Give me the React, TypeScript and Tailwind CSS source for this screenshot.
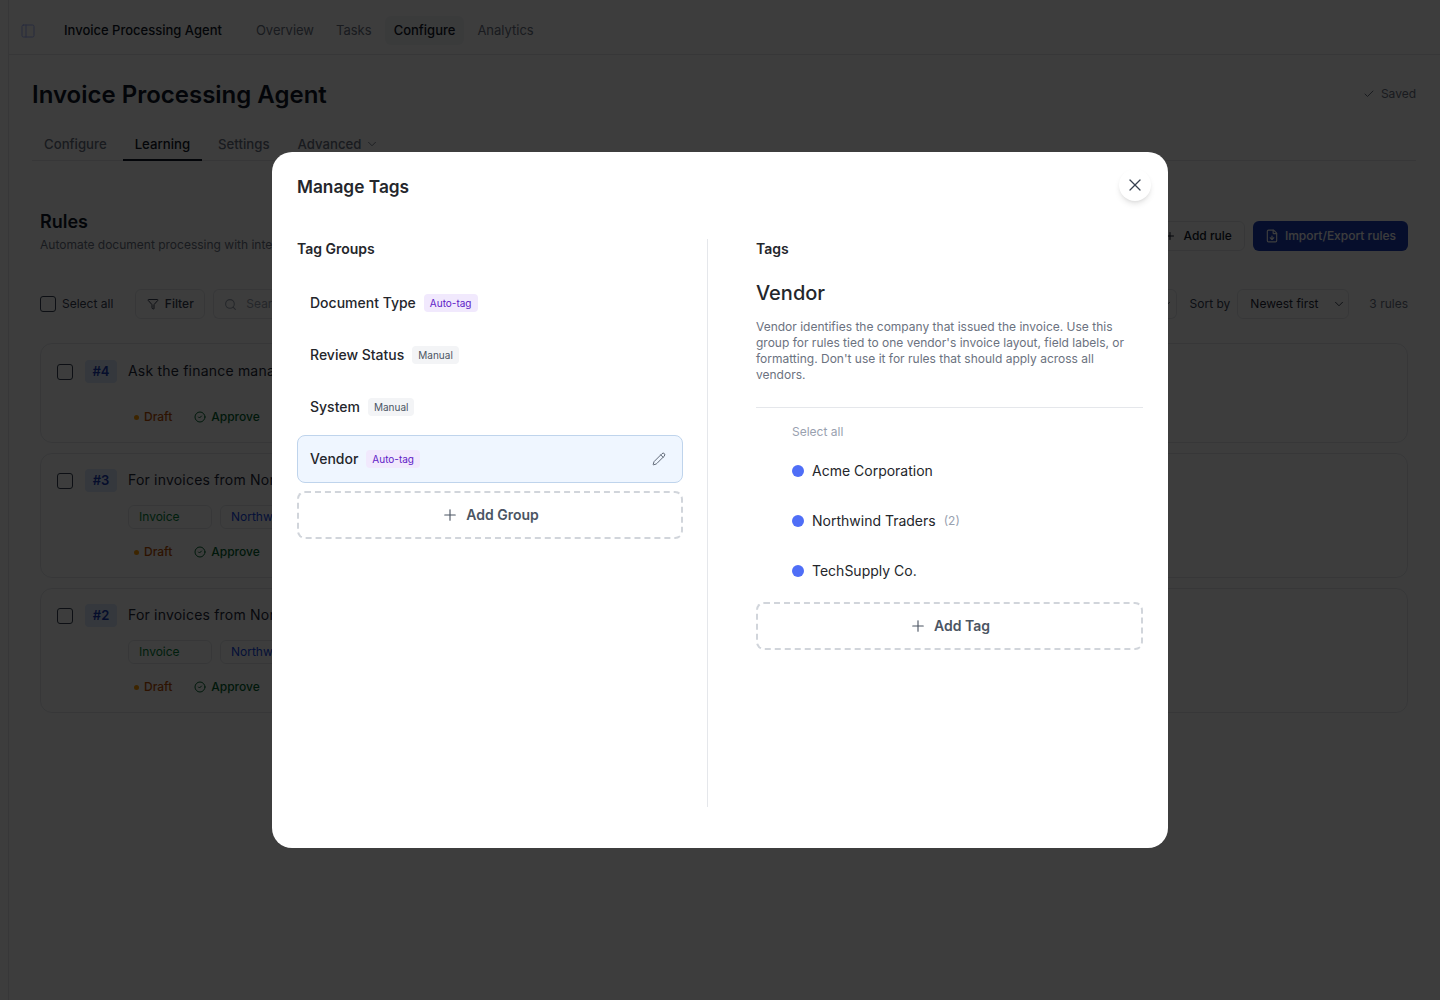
import { Check, ChevronDown, CircleCheck, FileDown, Funnel, PanelLeft, Pencil, Plus, Search, X } from "lucide-react";

const font = { fontFamily: "Inter, 'Liberation Sans', sans-serif" };

const rules = [
  { id: "#4", title: "Ask the finance manager", tags: false },
  { id: "#3", title: "For invoices from Northwind", tags: true },
  { id: "#2", title: "For invoices from Northwind", tags: true },
];

const groups = [
  { name: "Document Type", badge: "Auto-tag" },
  { name: "Review Status", badge: "Manual" },
  { name: "System", badge: "Manual" },
];

function Badge({ label }: { label: string }) {
  const auto = label === "Auto-tag";
  return (
    <span className={`rounded px-[6px] py-[2px] text-[10px] leading-[14px] ${auto ? "bg-[#f1e9fd] text-[#5f1bc7]" : "bg-[#f3f4f6] text-[#4b5563]"}`}>
      {label}
    </span>
  );
}

function RuleCard({ id, title, tags }: { id: string; title: string; tags: boolean }) {
  return (
    <div className={`flex rounded-xl border border-gray-200 bg-white pl-4 ${tags ? "h-[125px] pt-[15px]" : "h-[100px] pt-4"}`}>
      <div className="mt-1 h-4 w-4 rounded-[3px] border border-gray-700" />
      <div className="ml-3 flex h-[23px] w-8 items-center justify-center rounded bg-blue-100 text-[13px] font-semibold text-blue-800">{id}</div>
      <div className="ml-[11px] flex flex-col">
        <div className="text-sm leading-[22px] tracking-[0.2px] text-gray-800">{title}</div>
        {tags && (
          <div className="mt-[14px] flex gap-2 text-xs">
            <span className="flex h-6 w-[84px] items-center rounded-md border border-gray-200 px-[10px] text-green-700">Invoice</span>
            <span className="flex h-6 w-[140px] items-center rounded-md border border-gray-200 px-[10px] text-blue-700">Northwind</span>
          </div>
        )}
        <div className={`ml-[6px] flex items-center text-xs font-medium ${tags ? "mt-[15px]" : "mt-[27px]"}`}>
          <span className="h-[5px] w-[5px] rounded-full bg-amber-500" />
          <span className="ml-[5px] text-amber-700">Draft</span>
          <CircleCheck className="ml-[22px] h-3 w-3 text-green-800" />
          <span className="ml-[5px] text-green-800">Approve</span>
        </div>
      </div>
    </div>
  );
}

function AddButton({ label }: { label: string }) {
  return (
    <button className="flex h-12 w-full items-center justify-center gap-[7px] rounded-lg border-2 border-dashed border-[#d1d5db] text-sm font-semibold text-[#4b5563]">
      <Plus className="h-[18px] w-[18px]" strokeWidth={1.5} />
      {label}
    </button>
  );
}

function TagRow({ name, count, className }: { name: string; count?: number; className: string }) {
  return (
    <div className={`flex items-center pl-9 ${className}`}>
      <span className="h-3 w-3 rounded-full bg-[#4f6ef7]" />
      <span className="ml-2 text-sm text-[#24262b]">{name}</span>
      {count !== undefined && <span className="ml-2 text-xs text-gray-400">({count})</span>}
    </div>
  );
}

export default function App() {
  return (
    <div className="relative h-[1000px] overflow-hidden bg-white" style={font}>
      <div className="ml-2 h-full border-l border-gray-200">
        <nav className="flex h-[55px] items-center border-b border-gray-200 pl-[11px] pt-[7px] text-[13px]">
          <PanelLeft className="h-4 w-4 text-indigo-300" strokeWidth={1.5} />
          <span className="ml-7 font-medium text-gray-900">Invoice Processing Agent</span>
          <span className="ml-[34px] text-gray-500">Overview</span>
          <span className="ml-[22px] text-gray-500">Tasks</span>
          <span className="ml-[13px] rounded-md bg-gray-100 px-[9px] py-[5px] font-medium text-gray-900">Configure</span>
          <span className="ml-[13px] text-gray-500">Analytics</span>
        </nav>

        <div className="pl-[23px] pr-6">
          <div className="flex h-[79px] items-center justify-between">
            <h1 className="text-2xl font-semibold text-gray-900">Invoice Processing Agent</h1>
            <span className="flex items-center gap-[6px] pb-[2px] text-xs text-gray-500"><Check className="h-3 w-3" />Saved</span>
          </div>
          <div className="flex h-[27px] items-start border-b border-gray-200 text-[13.2px] font-medium text-gray-500">
            <span className="px-3 leading-5">Configure</span>
            <span className="ml-[4px] h-[27px] border-b-2 border-gray-900 px-3 leading-5 text-gray-900">Learning</span>
            <span className="ml-[4px] px-3 leading-5">Settings</span>
            <span className="ml-[4px] flex items-center gap-1 px-3 leading-5">Advanced <ChevronDown className="h-[14px] w-[14px]" strokeWidth={1.5} /></span>
          </div>
        </div>

        <div className="pl-[31px] pr-[32px] pt-[51px]">
          <div className="flex items-start justify-between">
            <div>
              <h2 className="text-lg font-semibold leading-5 text-gray-900">Rules</h2>
              <p className="mt-[5px] text-xs text-gray-500">Automate document processing with intel</p>
            </div>
            <div className="mt-[9px] flex gap-2 text-xs">
              <button className="flex h-[30px] items-center gap-2 rounded-md border border-gray-200 px-3 font-medium text-gray-900"><Plus className="h-3 w-3" />Add rule</button>
              <button className="flex h-[30px] items-center gap-[6px] rounded-md bg-blue-800 px-3 font-medium text-white"><FileDown className="h-[14px] w-[14px]" />Import/Export rules</button>
            </div>
          </div>

          <div className="mt-[36px] flex h-[30px] items-center text-xs">
            <span className="h-4 w-4 rounded-[3px] border border-gray-700" />
            <span className="ml-[6px] text-gray-700">Select all</span>
            <button className="ml-[22px] flex h-[30px] w-[70px] items-center justify-center gap-[6px] rounded-md border border-gray-200 font-medium text-gray-700"><Funnel className="h-3 w-3" />Filter</button>
            <div className="ml-2 flex h-[30px] w-[84px] items-center gap-[9px] rounded-l-md border-y border-l border-gray-200 pl-[10px] text-gray-400"><Search className="h-[13px] w-[13px] shrink-0" />Search</div>
            <div className="ml-auto flex items-center">
              <div className="mr-[13px] flex h-[30px] w-[40px] items-center justify-end rounded-r-md border-y border-r border-gray-200 pr-[3px] text-gray-700"><ChevronDown className="h-[14px] w-[14px]" strokeWidth={1.5} /></div>
              <span className="text-gray-700">Sort by</span>
              <div className="ml-[7px] flex h-[30px] w-28 items-center justify-between rounded-md border border-gray-200 pl-3 pr-[2px] text-gray-800">Newest first <ChevronDown className="h-[14px] w-[14px]" strokeWidth={1.5} /></div>
              <span className="ml-[20px] text-gray-500">3 rules</span>
            </div>
          </div>

          <div className="mt-[24px] flex flex-col gap-[10px]">
            {rules.map((r) => (
              <RuleCard key={r.id} {...r} />
            ))}
          </div>
        </div>
      </div>

      {/* dimmed backdrop + dialog */}
      <div className="absolute inset-0 flex items-start justify-center bg-black/[0.76] pt-[152px]">
        <div className="relative h-[696px] w-[896px] rounded-[20px] bg-white px-[25px] pt-6">
          <h3 className="text-[17.3px] font-semibold leading-[21px] text-[#24262b]">Manage Tags</h3>
          <button className="absolute right-[17px] top-[17px] flex h-8 w-8 items-center justify-center rounded-full bg-white shadow-md">
            <X className="h-5 w-5 text-[#374151]" strokeWidth={1.5} />
          </button>

          <div className="mt-[42px] grid h-[568px] grid-cols-[386px_1fr]">
            <div>
              <h4 className="text-sm font-semibold leading-5 text-[#24262b]">Tag Groups</h4>
              <div className="mt-[20px] flex flex-col gap-1">
                {groups.map((g) => (
                  <div key={g.name} className="flex h-12 items-center gap-2 px-[13px]">
                    <span className="text-sm font-medium text-[#24262b]">{g.name}</span>
                    <Badge label={g.badge} />
                  </div>
                ))}
                <div className="flex h-12 items-center gap-2 rounded-lg border border-[#bfd4ec] bg-[#eff6ff] px-3">
                  <span className="text-sm font-medium text-[#24262b]">Vendor</span>
                  <Badge label="Auto-tag" />
                  <Pencil className="ml-auto mr-1 h-[14px] w-[14px] text-[#4b5563]" strokeWidth={1.5} />
                </div>
              </div>
              <div className="mt-2">
                <AddButton label="Add Group" />
              </div>
            </div>

            <div className="ml-6 border-l border-gray-200 pl-12">
              <h4 className="text-sm font-semibold leading-5 text-[#24262b]">Tags</h4>
              <div className="mt-[20px] text-[20px] font-medium leading-[28px] text-[#24262b]">Vendor</div>
              <p className="mt-[12px] text-xs leading-4 text-[#6b7280]">
                Vendor identifies the company that issued the invoice. Use this group for rules tied to one vendor's invoice layout, field labels, or formatting. Don't use it for rules that should apply across all vendors.
              </p>
              <div className="mt-[24px] border-t border-gray-200" />
              <div className="mt-4 pl-9 text-xs leading-4 text-gray-400">Select all</div>
              <TagRow name="Acme Corporation" className="mt-[19px] h-[24px]" />
              <TagRow name="Northwind Traders" count={2} className="mt-[26px] h-[24px]" />
              <TagRow name="TechSupply Co." className="mt-[26px] h-[24px]" />
              <div className="mt-[19px]">
                <AddButton label="Add Tag" />
              </div>
            </div>
          </div>
        </div>
      </div>
    </div>
  );
}
